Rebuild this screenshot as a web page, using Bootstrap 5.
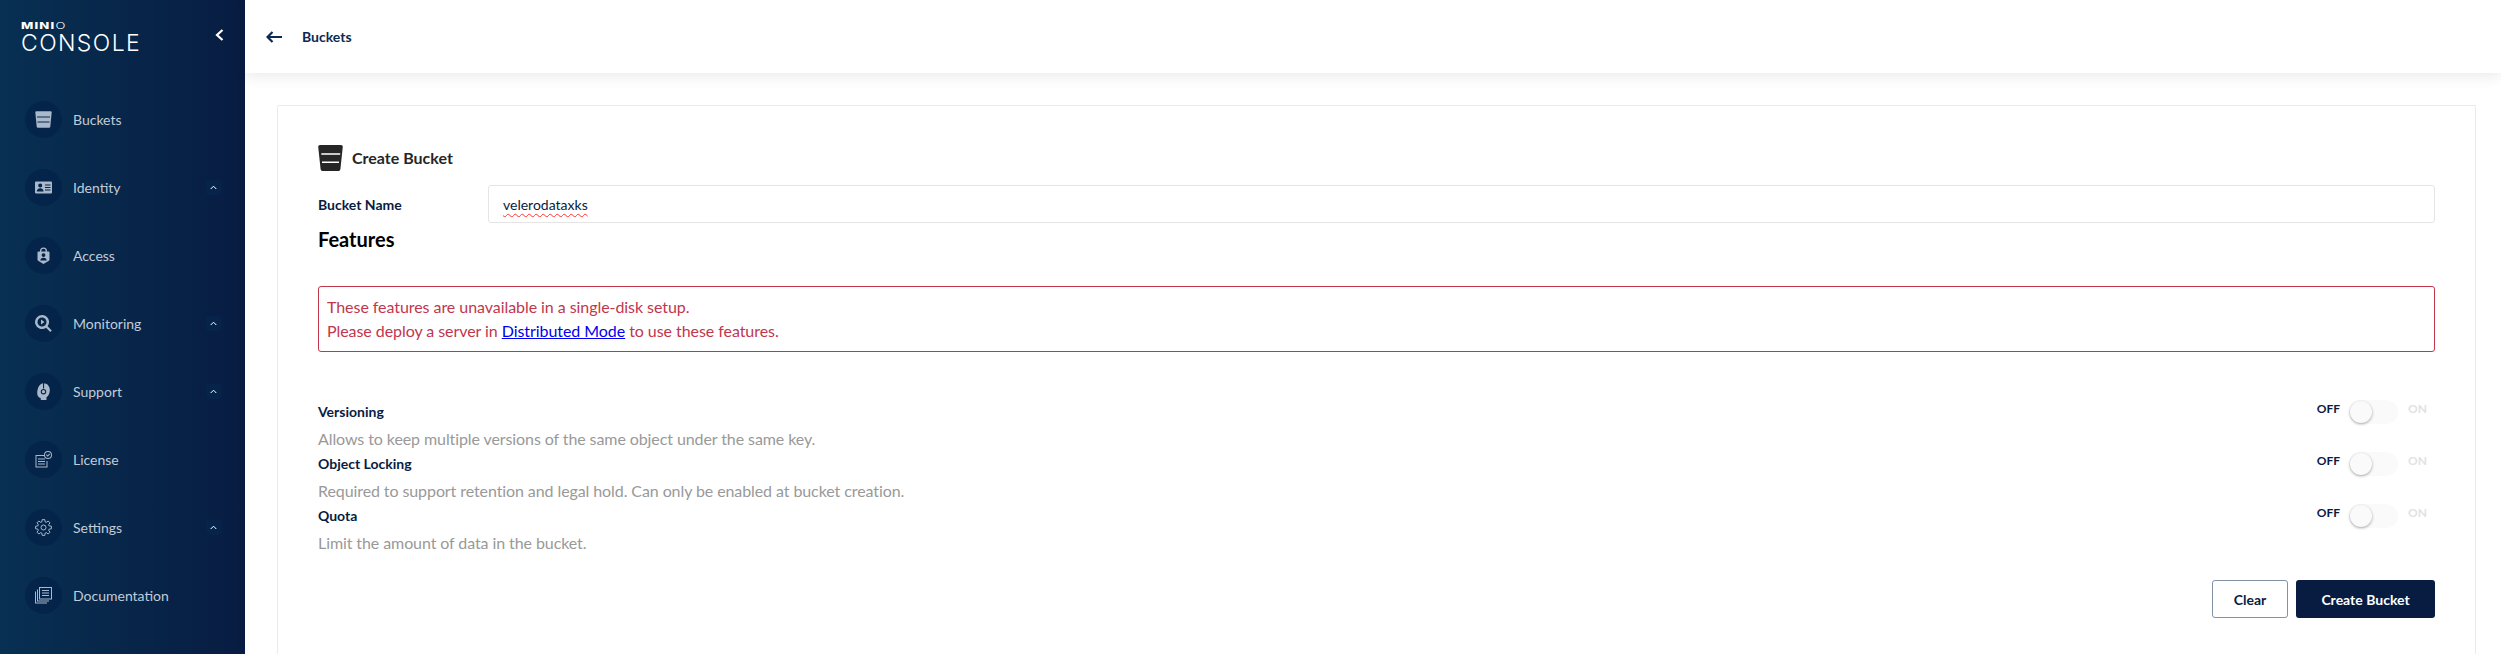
<!DOCTYPE html>
<html lang="en">
<head>
  <meta charset="UTF-8" />
  <title>MinIO Console - Create Bucket</title>
  <link rel="stylesheet" href="https://cdn.jsdelivr.net/npm/bootstrap@5.3.0/dist/css/bootstrap.min.css"/>
  <style>
    html, body { height: 654px; overflow: hidden; }
    body { font-family: Lato, "Liberation Sans", sans-serif; color: #081c42; background: #fff; }
    .side { width: 245px; height: 654px; background: linear-gradient(90deg, #073052 0%, #081c42 100%); }
    .brand { height: 73px; padding: 21px 21px 0 21px; color: #fff; }
    .brand-top { font-family: Inter, sans-serif; font-size: 9px; line-height: 9px; font-weight: 800; letter-spacing: .8px; transform: scaleX(1.45); transform-origin: left center; }
    .brand-top span { font-weight: 300; }
    .brand-main { font-family: Inter, sans-serif; font-size: 23px; line-height: 25px; font-weight: 300; letter-spacing: 1.4px; margin-top: 1px; }
    .side-menu { padding-top: 12px; }
    .menu-row { height: 68px; padding: 0 24px 0 25px; color: #c2cbd8; font-size: 14px; }
    .menu-circle { width: 37px; height: 37px; border-radius: 50%; background: rgba(0,24,66,.38); margin-right: 11px; }
    .menu-circle svg { width: 17px; height: 17px; fill: #a9b8ca; }
    .menu-arrow { width: 15px; height: 15px; background: #06234a; border-radius: 2px; }
    .content-area { min-width: 0; }
    .top-strip { height: 73px; padding-left: 21px; box-shadow: 0 3px 14px rgba(0,0,0,.09); font-size: 14px; font-weight: 700; color: #0a2a52; position: relative; }
    .top-strip svg { margin-right: 20px; }
    .work-area { padding: 32px 25px 0 32px; }
    .form-panel { border: 1px solid #eaeaea; border-bottom: 0; border-radius: 2px 2px 0 0; height: 549px; padding: 39px 40px 0 40px; }
    .panel-title { height: 26px; font-size: 16px; font-weight: 700; color: #262626; margin-bottom: 14px; }
    .panel-title svg { margin-right: 9px; }
    .name-label { width: 170px; font-size: 14px; font-weight: 700; }
    .name-input { height: 38px; border: 1px solid #e5e5e5; border-radius: 3px; font-size: 14px; color: #081c42; padding: 0 14px; box-shadow: none; }
    .squiggle { text-decoration: underline wavy #f33 1px; text-underline-offset: 3px; }
    .feat-title { font-size: 20px; font-weight: 700; color: #000; line-height: 24px; margin: 4px 0 0; }
    .warn-box { margin-top: 35px; height: 66px; padding: 0 8px; border: 1px solid #c2364c; border-radius: 3px; color: #c2364c; font-size: 16px; line-height: 24px; letter-spacing: -.06px; }
    .warn-box a { color: #0000ee; }
    .feat-list { margin-top: 48px; }
    .feat-row { height: 52px; }
    .feat-name { font-size: 14px; font-weight: 700; line-height: 24px; }
    .feat-desc { font-size: 16px; color: #999; line-height: 28px; margin-top: 1px; letter-spacing: -.09px; }
    .switch-wrap { font-size: 12px; font-weight: 700; margin-right: 8px; }
    .switch-wrap > span { margin-top: -6px; }
    .switch-track { width: 49px; height: 24px; border-radius: 12px; background: #fafafa; margin: 0 10px 0 9px; position: relative; }
    .switch-knob { position: absolute; left: 1px; top: 1px; width: 22px; height: 22px; border-radius: 50%; background: #fafafa; box-shadow: 0 1px 3px rgba(0,0,0,.35); }
    .switch-on { color: #e2e2e2; }
    .act-row { margin-top: 24px; gap: 8px; }
    .btn-clear { width: 76px; height: 38px; border: 1px solid #8391a5; border-radius: 3px; background: #fff; color: #081c42; font-size: 14px; font-weight: 700; padding: 0; }
    .btn-make { width: 139px; height: 38px; border: 0; border-radius: 3px; background: #081c42; color: #fff; font-size: 14px; font-weight: 700; padding: 0; }
  </style>
</head>
<body>
  <div class="d-flex">
    <!-- sidebar -->
    <div class="side flex-shrink-0">
      <div class="brand d-flex justify-content-between">
        <div>
          <div class="brand-top">MINI<span>O</span></div>
          <div class="brand-main">CONSOLE</div>
        </div>
        <svg width="9" height="12" viewBox="0 0 9 12" class="mt-2" fill="none" stroke="#fff" stroke-width="2.2"><path d="M7.5 1 2 6l5.500 5"/></svg>
      </div>
      <div class="side-menu">
        <div class="menu-row d-flex align-items-center">
          <div class="menu-circle d-flex align-items-center justify-content-center"><svg viewBox="0 0 17 17"><path d="M.3 1.300A1 1 0 0 1 1.300.3h14.400a1 1 0 0 1 1 1L15.300 15.700a1.200 1.200 0 0 1-1.200 1H2.900a1.200 1.200 0 0 1-1.200-1z"/><path fill="#07294f" d="M2 5.500h13v1H2zM2.500 10.500h12v1h-12z"/></svg></div>
          <span>Buckets</span>
        </div>
        <div class="menu-row d-flex align-items-center">
          <div class="menu-circle d-flex align-items-center justify-content-center"><svg viewBox="0 0 17 17"><path fill-rule="evenodd" d="M1 2.500h15a1 1 0 0 1 1 1v10a1 1 0 0 1-1 1H1a1 1 0 0 1-1-1v-10a1 1 0 0 1 1-1zM5.200 4.500a2 2 0 1 0 0 4 2 2 0 0 0 0-4zM1.800 12.500h6.800c0-2-1.400-3.300-3.400-3.300s-3.400 1.300-3.400 3.300zM10 5.500v1h5.500v-1zM10 8v1h5.500V8zM10 10.500v1h5.500v-1z"/></svg></div>
          <span>Identity</span>
          <div class="menu-arrow ms-auto d-flex align-items-center justify-content-center"><svg width="7" height="5" viewBox="0 0 7 5" fill="none" stroke="#fff"><path d="M.7 4 3.500 1.200 6.300 4"/></svg></div>
        </div>
        <div class="menu-row d-flex align-items-center">
          <div class="menu-circle d-flex align-items-center justify-content-center"><svg viewBox="0 0 17 17"><path fill-rule="evenodd" d="M5 4.500V4a3.500 3.500 0 0 1 7 0v.5h1.500a1 1 0 0 1 1 1v7.200c0 .5-.2.800-.6 1L8.500 17l-5.400-3.300c-.4-.2-.6-.5-.6-1V5.500a1 1 0 0 1 1-1zM6.300 4.500h4.400V4a2.200 2.200 0 0 0-4.400 0zM8.500 6.200a1.900 1.900 0 1 0 0 3.800 1.900 1.900 0 0 0 0-3.800zM5.300 13.500h6.400c0-1.700-1.300-2.800-3.200-2.800s-3.200 1.100-3.200 2.800z"/></svg></div>
          <span>Access</span>
        </div>
        <div class="menu-row d-flex align-items-center">
          <div class="menu-circle d-flex align-items-center justify-content-center"><svg viewBox="0 0 17 17"><path fill-rule="evenodd" d="M7 0a7 7 0 0 1 5.600 11.200l4.200 4.200-1.500 1.500-4.200-4.200A7 7 0 1 1 7 0zm0 2.500a4.500 4.500 0 1 0 0 9 4.500 4.500 0 0 0 0-9zM6 4.500l3.500 2.500L6 9.500z"/></svg></div>
          <span>Monitoring</span>
          <div class="menu-arrow ms-auto d-flex align-items-center justify-content-center"><svg width="7" height="5" viewBox="0 0 7 5" fill="none" stroke="#fff"><path d="M.7 4 3.500 1.200 6.300 4"/></svg></div>
        </div>
        <div class="menu-row d-flex align-items-center">
          <div class="menu-circle d-flex align-items-center justify-content-center"><svg viewBox="0 0 17 17"><path d="M8.500.3c3.800 0 6.300 2.900 6.300 6.700 0 3.300-1.100 5.800-3.300 7.300V17H5.800v-1.800C3.600 14.800 2.200 13 2.200 10.300 2.200 5.500 4.300.3 8.500.3z"/><path fill="#07294f" d="M8 0h1.100v5.500H8z"/><circle cx="8.500" cy="8.700" r="2.200" fill="none" stroke="#07294f" stroke-width="1.100"/></svg></div>
          <span>Support</span>
          <div class="menu-arrow ms-auto d-flex align-items-center justify-content-center"><svg width="7" height="5" viewBox="0 0 7 5" fill="none" stroke="#fff"><path d="M.7 4 3.500 1.200 6.300 4"/></svg></div>
        </div>
        <div class="menu-row d-flex align-items-center">
          <div class="menu-circle d-flex align-items-center justify-content-center"><svg viewBox="0 0 17 17"><path d="M.5 4h9.200v1H1.500v10.500h10V10h1v6.500H.500z"/><path d="M3 7.500h7v1H3zM3 10h7v1H3zM3 12.500h7v1H3z"/><path fill-rule="evenodd" d="M13 0a4 4 0 1 1 0 8 4 4 0 0 1 0-8zm0 1a3 3 0 1 0 0 6 3 3 0 0 0 0-6zm1.500 1.500.7.700L12.700 5.700 11 4l.7-.7 1 1z"/></svg></div>
          <span>License</span>
        </div>
        <div class="menu-row d-flex align-items-center">
          <div class="menu-circle d-flex align-items-center justify-content-center"><svg viewBox="0 0 17 17"><g transform="translate(8.500 8.500)" fill="none" stroke="#a9b8ca" stroke-linejoin="round"><circle r="2.500"/><polygon points="5.550,-1.700 7.900,-1.250 7.900,1.250 5.550,1.700 5.130,2.720 6.470,4.700 4.700,6.470 2.720,5.130 1.700,5.550 1.250,7.900 -1.250,7.900 -1.700,5.550 -2.720,5.130 -4.700,6.470 -6.470,4.700 -5.130,2.720 -5.550,1.700 -7.900,1.250 -7.900,-1.250 -5.550,-1.700 -5.130,-2.720 -6.470,-4.700 -4.700,-6.470 -2.720,-5.130 -1.700,-5.550 -1.250,-7.900 1.250,-7.900 1.700,-5.550 2.720,-5.130 4.700,-6.470 6.470,-4.700 5.130,-2.720"/></g></svg></div>
          <span>Settings</span>
          <div class="menu-arrow ms-auto d-flex align-items-center justify-content-center"><svg width="7" height="5" viewBox="0 0 7 5" fill="none" stroke="#fff"><path d="M.7 4 3.500 1.200 6.300 4"/></svg></div>
        </div>
        <div class="menu-row d-flex align-items-center">
          <div class="menu-circle d-flex align-items-center justify-content-center"><svg viewBox="0 0 17 17"><path fill-rule="evenodd" d="M4 0h13v12.500H4zM5 1v10.500h11V1z"/><path d="M7 3h7v1H7zM7 5.500h7v1H7zM7 8h7v1H7zM0 4.500h1v11h11v1H0z"/><path d="M2 2.500h1v11h11v1H2z"/></svg></div>
          <span>Documentation</span>
        </div>
      </div>
    </div>

    <!-- main -->
    <div class="content-area flex-grow-1">
      <div class="top-strip d-flex align-items-center">
        <svg width="16" height="12" viewBox="0 0 16 12" fill="none" stroke="#0a2a52" stroke-width="2.200"><path d="M16 6H2M6.500 1 1.500 6l5 5"/></svg>
        <span>Buckets</span>
      </div>
      <div class="work-area">
        <div class="form-panel">
          <div class="panel-title d-flex align-items-center">
            <svg width="25" height="26" viewBox="0 0 25 26" fill="#262626"><path d="M.2 1.800A1.800 1.800 0 0 1 2 0h21a1.800 1.800 0 0 1 1.800 1.800L22.400 24.300a1.900 1.900 0 0 1-1.900 1.700H4.500a1.900 1.900 0 0 1-1.900-1.700z"/><path fill="#fff" d="M3.300 8.300h18.900v1.400H3.300zM4 16.500h17v1.400H4z"/></svg>
            <span>Create Bucket</span>
          </div>
          <div class="d-flex align-items-center">
            <label class="name-label flex-shrink-0" for="bucketName">Bucket Name</label>
            <div class="name-input form-control d-flex align-items-center"><span class="squiggle" id="bucketName">velerodataxks</span></div>
          </div>
          <h3 class="feat-title">Features</h3>
          <div class="warn-box d-flex flex-column justify-content-center">
            <div>These features are unavailable in a single-disk setup.</div>
            <div>Please deploy a server in <a href="#">Distributed Mode</a> to use these features.</div>
          </div>
          <div class="feat-list">
            <div class="feat-row d-flex justify-content-between">
              <div><div class="feat-name">Versioning</div><div class="feat-desc">Allows to keep multiple versions of the same object under the same key.</div></div>
              <div class="switch-wrap d-flex align-items-center align-self-start"><span>OFF</span><div class="switch-track"><div class="switch-knob"></div></div><span class="switch-on">ON</span></div>
            </div>
            <div class="feat-row d-flex justify-content-between">
              <div><div class="feat-name">Object Locking</div><div class="feat-desc">Required to support retention and legal hold. Can only be enabled at bucket creation.</div></div>
              <div class="switch-wrap d-flex align-items-center align-self-start"><span>OFF</span><div class="switch-track"><div class="switch-knob"></div></div><span class="switch-on">ON</span></div>
            </div>
            <div class="feat-row d-flex justify-content-between">
              <div><div class="feat-name">Quota</div><div class="feat-desc">Limit the amount of data in the bucket.</div></div>
              <div class="switch-wrap d-flex align-items-center align-self-start"><span>OFF</span><div class="switch-track"><div class="switch-knob"></div></div><span class="switch-on">ON</span></div>
            </div>
          </div>
          <div class="act-row d-flex justify-content-end">
            <button class="btn-clear" type="button">Clear</button>
            <button class="btn-make" type="button">Create Bucket</button>
          </div>
        </div>
      </div>
    </div>
  </div>
  <script src="https://cdn.jsdelivr.net/npm/bootstrap@5.3.0/dist/js/bootstrap.bundle.min.js"></script>
</body>
</html>
